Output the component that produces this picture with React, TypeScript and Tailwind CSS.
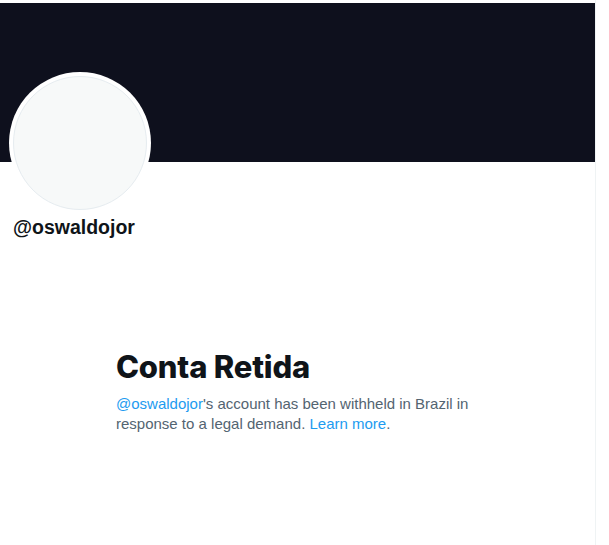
export default function App() {
  return (
    <div className="flex min-h-[545px] bg-white">
      <main className="w-[596px] shrink-0 border-r border-[#eff3f4] pt-[3px] min-h-[545px]">
        <div className="h-[159px] bg-[#0e101d]" />
        <div className="relative -mt-[90px] ml-[9px] h-[142px] w-[142px] rounded-full bg-white p-[4px]">
          <div className="h-full w-full rounded-full border border-[#e6ecf0] bg-[#f7f9f9]" />
        </div>
        <div className="ml-[13px] mt-[1px] font-['Liberation_Sans',Arial,sans-serif] text-[19.5px] font-bold leading-[24px] text-[#0f1419]">
          @oswaldojor
        </div>
        <section className="ml-[116px] mt-[110px] w-[370px]">
          <h2 className="font-['Inter',sans-serif] text-[31px] font-extrabold leading-[36px] tracking-[-0.2px] text-[#0f1419]">
            Conta Retida
          </h2>
          <p className="mt-[9px] font-['Liberation_Sans',Arial,sans-serif] text-[15px] leading-[20px] text-[#536471]">
            <a className="text-[#1d9bf0]">@oswaldojor</a>'s account has been withheld in Brazil in response to a legal demand.{' '}
            <a className="text-[#1d9bf0]">Learn more</a>.
          </p>
        </section>
      </main>
      <div className="flex-1 bg-white" />
    </div>
  );
}
